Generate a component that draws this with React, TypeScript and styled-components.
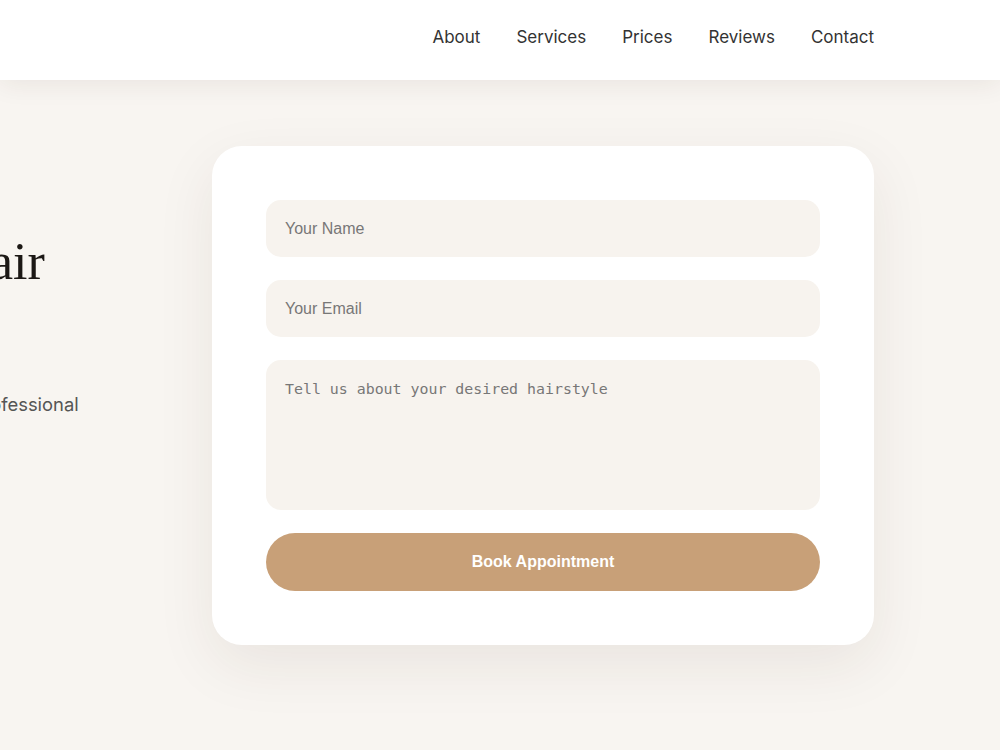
import React from 'react';
import styled, { createGlobalStyle } from 'styled-components';

const GlobalStyle = createGlobalStyle`
    * {
        box-sizing: border-box;
    }
    html, body {
        margin: 0;
        padding: 0;
        overflow: hidden;
    }
    body {
        background: #f8f5f1;
        font-family: Inter, "Liberation Sans", sans-serif;
        color: #333;
    }
`;

const Header = styled.header`
    position: relative;
    z-index: 2;
    height: 80px;
    background: #ffffff;
    box-shadow: 0 4px 26px rgba(60, 40, 20, 0.08);
    display: flex;
    align-items: center;
    justify-content: flex-end;
    padding: 0 126px 6px 0;
`;

const Nav = styled.nav`
    display: flex;
    gap: 36px;
`;

const NavLink = styled.a`
    font-family: Inter, sans-serif;
    font-size: 17px;
    color: #333;
    text-decoration: none;
    cursor: pointer;
`;

const Hero = styled.section`
    display: flex;
    justify-content: flex-end;
    align-items: flex-start;
    gap: 103px;
    padding: 66px 126px 100px 0;
`;

const Intro = styled.div`
    flex-shrink: 0;
    width: 500px;
    padding-top: 85px;
`;

const Title = styled.h1`
    margin: 0 0 35px;
    font-family: "Liberation Serif", serif;
    font-weight: 400;
    font-size: 52px;
    line-height: 1.2;
    color: #1c1815;
    white-space: nowrap;
`;

const Lead = styled.p`
    margin: 0;
    font-family: Inter, sans-serif;
    font-size: 18.4px;
    line-height: 27px;
    color: #555;
    white-space: nowrap;
`;

const Card = styled.form`
    flex-shrink: 0;
    width: 662px;
    padding: 54px;
    background: #ffffff;
    border-radius: 30px;
    box-shadow: 0 20px 60px rgba(60, 40, 20, 0.08);
    display: flex;
    flex-direction: column;
    gap: 23px;
`;

const Field = styled.input`
    width: 100%;
    height: 57px;
    padding: 0 19px;
    border: none;
    outline: none;
    border-radius: 15px;
    background: #f7f3ee;
    font-family: "Liberation Sans", Arial, sans-serif;
    font-size: 16px;
    color: #333;
    &::placeholder {
        color: #777;
    }
`;

const Message = styled.textarea`
    width: 100%;
    height: 150px;
    padding: 19px 19px;
    border: none;
    outline: none;
    resize: none;
    border-radius: 15px;
    background: #f7f3ee;
    font-family: "DejaVu Sans Mono", monospace;
    font-size: 14.9px;
    line-height: 20px;
    color: #333;
    &::placeholder {
        color: #777;
    }
`;

const Submit = styled.button`
    width: 100%;
    height: 58px;
    border: none;
    border-radius: 999px;
    background: #c8a078;
    color: #ffffff;
    font-family: "Liberation Sans", Arial, sans-serif;
    font-weight: 700;
    font-size: 16px;
    cursor: pointer;
`;

const links = ['About', 'Services', 'Prices', 'Reviews', 'Contact'];

export default function App() {
    return (
        <>
            <GlobalStyle />
            <Header>
                <Nav>
                    {links.map(l => (
                        <NavLink key={l}>{l}</NavLink>
                    ))}
                </Nav>
            </Header>
            <Hero>
                <Intro>
                    <Title>
                        Transform Your Hair
                        <br />
                        Into Art
                    </Title>
                    <Lead>
                        Experience the art of hair styling with our professional
                        <br />
                        stylists in a relaxing space.
                    </Lead>
                </Intro>
                <Card onSubmit={e => e.preventDefault()}>
                    <Field type="text" placeholder="Your Name" />
                    <Field type="email" placeholder="Your Email" />
                    <Message placeholder="Tell us about your desired hairstyle" />
                    <Submit type="submit">Book Appointment</Submit>
                </Card>
            </Hero>
        </>
    );
}
